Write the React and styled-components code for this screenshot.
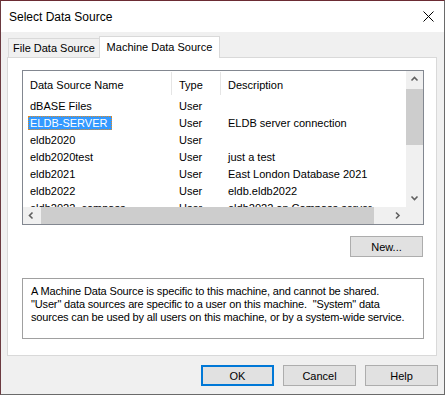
import React from 'react';
import styled, { createGlobalStyle } from 'styled-components';

const GlobalStyle = createGlobalStyle`
  html, body {
    margin: 0;
    padding: 0;
    background: #ffffff;
  }
  body {
    font-family: "Liberation Sans", Arial, sans-serif;
    font-size: 11px;
    color: #000;
  }
`;

const Window = styled.div`
  width: 445px;
  height: 395px;
  box-sizing: border-box;
  border: 1px solid #6a6a6a;
  border-top-color: #6b2b33;
  border-left-color: #6b3a40;
  display: flex;
  flex-direction: column;
  background: #f0f0f0;
`;

const TitleBar = styled.div`
  height: 31px;
  flex: none;
  background: #fff;
  display: flex;
  align-items: center;
  justify-content: space-between;
  padding: 0 10px 0 8px;
  font-size: 12px;
`;

const CloseIcon = () => (
  <svg width="11" height="11" viewBox="0 0 11 11">
    <path d="M0.5 0.5 L10.5 10.5 M10.5 0.5 L0.5 10.5" stroke="#000" strokeWidth="1" />
  </svg>
);

const Body = styled.div`
  flex: 1;
  display: flex;
  flex-direction: column;
  padding: 5px 6px 0 6px;
`;

const TabStrip = styled.div`
  display: flex;
  align-items: flex-end;
  height: 21px;
  padding-left: 1px;
  position: relative;
  z-index: 1;
  margin-bottom: -1px;
`;

const Tab = styled.div`
  box-sizing: border-box;
  width: ${p => p.$w}px;
  height: ${p => (p.$active ? 22 : 20)}px;
  border: 1px solid #d9d9d9;
  border-bottom: ${p => (p.$active ? 'none' : '1px solid #d9d9d9')};
  background: ${p => (p.$active ? '#fff' : '#f0f0f0')};
  margin-left: ${p => (p.$active ? '-1px' : '0')};
  display: flex;
  align-items: center;
  justify-content: center;
  padding-bottom: ${p => (p.$active ? 2 : 0)}px;
`;

const Panel = styled.div`
  box-sizing: border-box;
  width: 430px;
  height: 299px;
  background: #fff;
  border: 1px solid #d9d9d9;
  padding: 12px 13px 0 14px;
  display: flex;
  flex-direction: column;
`;

const ListBox = styled.div`
  box-sizing: border-box;
  width: 402px;
  height: 155px;
  border: 1px solid #828790;
  display: grid;
  grid-template-columns: 1fr 17px;
  grid-template-rows: 1fr 17px;
  overflow: hidden;
`;

const ListView = styled.div`
  overflow: hidden;
`;

const Row = styled.div`
  display: grid;
  grid-template-columns: 149px 49px 1fr;
  height: ${p => (p.$header ? 26 : 17)}px;
  align-items: center;
  white-space: nowrap;
`;

const Cell = styled.div`
  height: 100%;
  display: flex;
  align-items: center;
  padding-left: ${p => p.$pad ?? 7}px;
  box-sizing: border-box;
  overflow: hidden;
`;

const HeaderCell = styled(Cell)`
  border-right: ${p => (p.$last ? 'none' : '1px solid #e5e5e5')};
  height: 23px;
  margin-top: 1px;
  align-self: start;
  padding-top: 2px;
`;

const Selected = styled.span`
  background: #3399ff;
  color: #fff;
  padding: 1px 5px 1px 2px;
  outline: 1px dotted #e08a20;
  outline-offset: -1px;
`;

const ScrollTrack = styled.div`
  background: #f0f0f0;
  display: flex;
  flex-direction: ${p => (p.$vertical ? 'column' : 'row')};
`;

const ScrollArrow = styled.div`
  flex: none;
  width: 17px;
  height: 17px;
  display: flex;
  align-items: center;
  justify-content: center;
`;

const ScrollGap = styled.div`
  flex: 1;
  display: flex;
  flex-direction: ${p => (p.$vertical ? 'column' : 'row')};
  padding: ${p => (p.$vertical ? '1px 0 0 0' : '0 0 0 1px')};
`;

const Thumb = styled.div`
  background: #cdcdcd;
  flex: none;
  ${p => (p.$vertical ? `height: ${p.$size}px; width: 100%;` : `width: ${p.$size}px; height: 100%;`)}
`;

const Corner = styled.div`
  background: #f0f0f0;
`;

const Chevron = ({ dir }) => {
  const paths = {
    up: 'M1.5 5.5 L4.5 2.5 L7.5 5.5',
    down: 'M1.5 2.5 L4.5 5.5 L7.5 2.5',
    left: 'M5.5 1.5 L2.5 4.5 L5.5 7.5',
    right: 'M3 1.5 L6 4.5 L3 7.5',
  };
  return (
    <svg width="9" height="9" viewBox="0 0 9 9">
      <path d={paths[dir]} fill="none" stroke="#606060" strokeWidth="1.6" />
    </svg>
  );
};

const ButtonRow = styled.div`
  display: flex;
  justify-content: flex-end;
  gap: ${p => p.$gap ?? 0}px;
  margin-top: ${p => p.$top ?? 0}px;
  padding-right: ${p => p.$right ?? 0}px;
`;

const Button = styled.button`
  box-sizing: border-box;
  width: 73px;
  height: ${p => p.$h ?? 21}px;
  background: #e1e1e1;
  border: ${p => (p.$default ? '2px solid #0078d7' : '1px solid #adadad')};
  font-family: "Liberation Sans", Arial, sans-serif;
  font-size: 11px;
  color: #000;
  padding: 0;
  margin: 0;
`;

const InfoBox = styled.div`
  box-sizing: border-box;
  margin-top: 21px;
  width: 402px;
  height: 61px;
  border: 1px solid #a0a0a0;
  padding: 6px 8px;
  line-height: 13px;
  white-space: nowrap;
  letter-spacing: -0.15px;
  overflow: hidden;
`;

const rows = [
  ['dBASE Files', 'User', ''],
  ['ELDB-SERVER', 'User', 'ELDB server connection', true],
  ['eldb2020', 'User', ''],
  ['eldb2020test', 'User', 'just a test'],
  ['eldb2021', 'User', 'East London Database 2021'],
  ['eldb2022', 'User', 'eldb.eldb2022'],
  ['eldb2022_compass', 'User', 'eldb2022 on Compass server'],
];

export default function App() {
  return (
    <>
      <GlobalStyle />
      <Window>
        <TitleBar>
          <span>Select Data Source</span>
          <CloseIcon />
        </TitleBar>
        <Body>
          <TabStrip>
            <Tab $w={92}>File Data Source</Tab>
            <Tab $w={121} $active>Machine Data Source</Tab>
          </TabStrip>
          <Panel>
            <ListBox>
              <ListView>
                <Row $header>
                  <HeaderCell>Data Source Name</HeaderCell>
                  <HeaderCell>Type</HeaderCell>
                  <HeaderCell $last>Description</HeaderCell>
                </Row>
                {rows.map(([name, type, desc, sel]) => (
                  <Row key={name}>
                    <Cell $pad={sel ? 5 : 7}>{sel ? <Selected>{name}</Selected> : name}</Cell>
                    <Cell>{type}</Cell>
                    <Cell>{desc}</Cell>
                  </Row>
                ))}
              </ListView>
              <ScrollTrack $vertical>
                <ScrollArrow><Chevron dir="up" /></ScrollArrow>
                <ScrollGap $vertical>
                  <Thumb $vertical $size={56} />
                </ScrollGap>
                <ScrollArrow><Chevron dir="down" /></ScrollArrow>
              </ScrollTrack>
              <ScrollTrack>
                <ScrollArrow><Chevron dir="left" /></ScrollArrow>
                <ScrollGap>
                  <Thumb $size={333} />
                </ScrollGap>
                <ScrollArrow><Chevron dir="right" /></ScrollArrow>
              </ScrollTrack>
              <Corner />
            </ListBox>
            <ButtonRow $top={11}>
              <Button>New...</Button>
            </ButtonRow>
            <InfoBox>
              A Machine Data Source is specific to this machine, and cannot be shared.
              <br />
              "User" data sources are specific to a user on this machine.&nbsp; "System" data
              <br />
              sources can be used by all users on this machine, or by a system-wide service.
            </InfoBox>
          </Panel>
          <ButtonRow $top={9} $gap={9} $right={0}>
            <Button $default>OK</Button>
            <Button>Cancel</Button>
            <Button>Help</Button>
          </ButtonRow>
        </Body>
      </Window>
    </>
  );
}
